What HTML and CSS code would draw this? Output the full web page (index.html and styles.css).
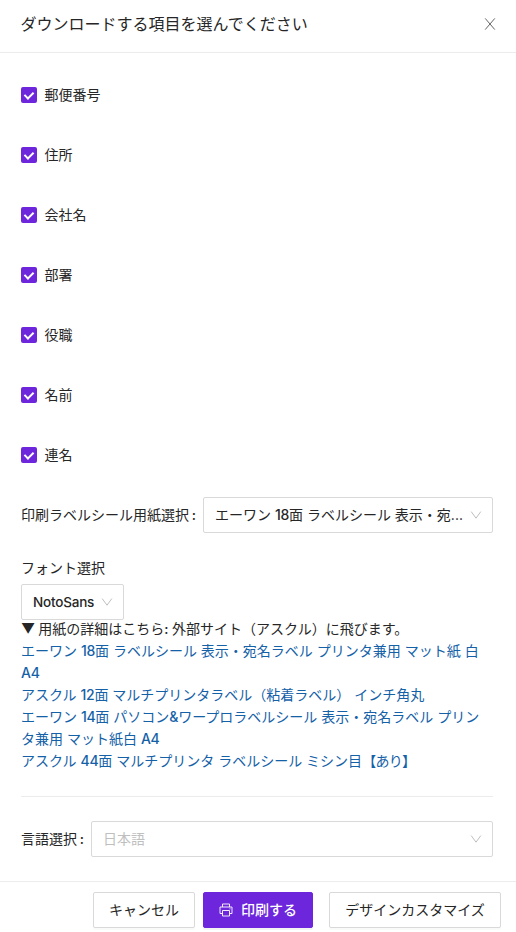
FILE: index.html
```html
<!DOCTYPE html>
<html lang="ja">
<head>
  <meta charset="UTF-8" />
  <meta name="viewport" content="width=device-width, initial-scale=1.0" />
  <title>ダウンロードする項目を選んでください</title>
  <link rel="stylesheet" href="styles.css">
</head>
<body>
  <div class="modal">
    <div class="modal-header">
      <h1>ダウンロードする項目を選んでください</h1>
      <button class="close" aria-label="閉じる">
        <svg width="12" height="12" viewBox="0 0 12 12"><path d="M1.2 0.4L10.8 11.6M10.8 0.4L1.2 11.6" /></svg>
      </button>
    </div>
    <div class="modal-body">
      <label class="check-row"><input type="checkbox" checked><span>郵便番号</span></label>
      <label class="check-row"><input type="checkbox" checked><span>住所</span></label>
      <label class="check-row"><input type="checkbox" checked><span>会社名</span></label>
      <label class="check-row"><input type="checkbox" checked><span>部署</span></label>
      <label class="check-row"><input type="checkbox" checked><span>役職</span></label>
      <label class="check-row"><input type="checkbox" checked><span>名前</span></label>
      <label class="check-row"><input type="checkbox" checked><span>連名</span></label>

      <div class="form-row">
        <span class="label">印刷ラベルシール用紙選択<i>:</i></span>
        <div class="select">
          <span class="value">エーワン <b>18</b>面 ラベルシール 表示・宛...</span>
          <svg class="arrow" width="12" height="12" viewBox="0 0 12 12"><path d="M1.2 2.6L6 9.2L10.8 2.6" /></svg>
        </div>
      </div>

      <div class="font-label">フォント選択</div>
      <div class="select font-select">
        <span class="value">NotoSans</span>
        <svg class="arrow" width="12" height="12" viewBox="0 0 12 12"><path d="M1.2 2.6L6 9.2L10.8 2.6" /></svg>
      </div>

      <div class="links">
        <div><span class="triangle">▼</span>用紙の詳細はこちら<b>:</b> 外部サイト（アスクル）に飛びます。</div>
        <a href="#">エーワン <b>18</b>面 ラベルシール 表示・宛名ラベル プリンタ兼用 マット紙 白 <b>A4</b></a>
        <a href="#">アスクル <b>12</b>面 マルチプリンタラベル（粘着ラベル） インチ角丸</a>
        <a href="#">エーワン <b>14</b>面 パソコン<b>&amp;</b>ワープロラベルシール 表示・宛名ラベル プリンタ兼用 マット紙白 <b>A4</b></a>
        <a href="#">アスクル <b>44</b>面 マルチプリンタ ラベルシール ミシン目<span class="bracket">【あり】</span></a>
      </div>

      <hr>

      <div class="form-row">
        <span class="label">言語選択<i>:</i></span>
        <div class="select disabled">
          <span class="value">日本語</span>
          <svg class="arrow" width="12" height="12" viewBox="0 0 12 12"><path d="M1.2 2.6L6 9.2L10.8 2.6" /></svg>
        </div>
      </div>
    </div>
    <div class="modal-footer">
      <button class="btn cancel">キャンセル</button>
      <button class="btn primary">
        <svg width="14" height="14" viewBox="0 0 14 14"><path d="M3.5 4V1h7v3M3.5 10.5H1V4h12v6.500H10.500M3.500 7.500h7V13h-7zM10.500 5.800h1" /></svg>
        <span>印刷する</span>
      </button>
      <button class="btn customize">デザインカスタマイズ</button>
    </div>
  </div>
</body>
</html>
```
FILE: styles.css
```css
* {
  box-sizing: border-box;
}
body {
  margin: 0;
  background: #fff;
  color: #262626;
  font-family: Inter, "Noto Sans CJK JP", sans-serif;
  font-size: 14px;
  line-height: 22px;
}
b {
  font-weight: 500;
  letter-spacing: -0.3px;
}
button {
  font: inherit;
  color: inherit;
  cursor: pointer;
}
svg {
  fill: none;
  stroke: currentColor;
  flex: none;
}
.modal-header {
  display: flex;
  align-items: center;
  justify-content: space-between;
  height: 53px;
  padding: 0 20px 4px 21px;
  border-bottom: 1px solid #ececec;
}
.modal-header h1 {
  margin: 0 0 0 -0.5px;
  font-size: 16px;
  font-weight: 400;
}
.close {
  display: flex;
  padding: 0;
  border: none;
  background: none;
  color: #666;
}
.modal-body {
  padding: 24px 23px 24px 21px;
}
.check-row {
  display: flex;
  align-items: center;
  gap: 7.5px;
  height: 36px;
  margin-bottom: 24px;
}
.check-row input {
  appearance: none;
  display: flex;
  justify-content: center;
  width: 16px;
  height: 16px;
  margin: 0;
  border-radius: 2px;
  background: #6d26dc;
}
.check-row input::after {
  content: "";
  box-sizing: border-box;
  width: 6px;
  height: 9px;
  margin-top: 3px;
  border: solid #fff;
  border-width: 0 2px 2px 0;
  transform: rotate(45deg);
}
.form-row {
  display: flex;
  align-items: center;
  gap: 7px;
}
.label {
  display: flex;
  flex: none;
}
.label i {
  width: 7px;
  font-style: normal;
  font-weight: 500;
  text-align: right;
}
.select {
  display: flex;
  flex: 1;
  align-items: center;
  justify-content: space-between;
  gap: 4px;
  min-width: 0;
  height: 36px;
  padding: 0 10px 0 11px;
  border: 1px solid #d9d9d9;
  border-radius: 2px;
}
.select .value {
  white-space: nowrap;
}
.arrow {
  color: #bfbfbf;
}
.disabled .value {
  color: #bfbfbf;
}
.font-label {
  margin: 24px 0 5px;
}
.font-select {
  width: 103px;
}
.font-select .value {
  font-size: 13.5px;
  font-weight: 500;
  letter-spacing: -0.2px;
}
.links {
  margin-top: -2px;
}
.links a {
  display: block;
  color: #1461a8;
  text-decoration: none;
}
.bracket {
  letter-spacing: -0.7px;
}
.triangle {
  margin-right: 3px;
}
hr {
  height: 1px;
  margin: 24px 0;
  border: none;
  background: #ececec;
}
.modal-footer {
  display: flex;
  justify-content: flex-end;
  padding: 10px 15px;
  border-top: 1px solid #ececec;
}
.btn {
  display: flex;
  align-items: center;
  justify-content: center;
  gap: 8px;
  height: 36px;
  padding: 0;
  border: 1px solid #d9d9d9;
  border-radius: 2px;
  background: #fff;
  box-shadow: 0 2px 0 rgba(0, 0, 0, 0.02);
}
.cancel {
  width: 102px;
}
.primary {
  width: 110px;
  margin: 0 16px 0 8px;
  border-color: #6d26dc;
  background: #6d26dc;
  color: #fff;
  font-weight: 500;
  box-shadow: 0 2px 0 rgba(0, 0, 0, 0.045);
}
.primary svg {
  stroke-width: 0.9;
}
.customize {
  width: 172px;
}
```
